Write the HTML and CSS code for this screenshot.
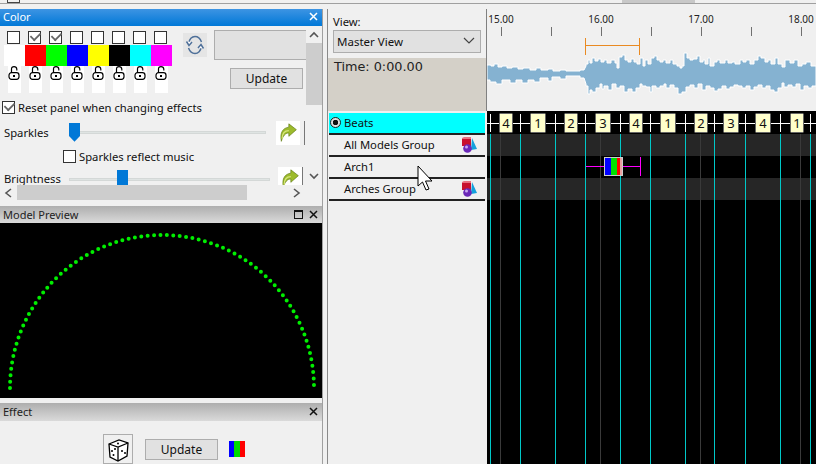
FILE: index.html
```html
<!DOCTYPE html>
<html lang="en">
<head>
  <meta charset="UTF-8">
  <title>Sequencer</title>
  <link rel="stylesheet" href="styles.css">
</head>
<body>

  <svg class="defs" width="0" height="0">
    <symbol id="lock" viewBox="0 0 13 14">
      <path d="M3.500 7V3Q3.500 .7 6 .7T8.800 3V4.500" fill="none" stroke="#000" stroke-width="1.200"/>
      <rect x="1" y="6.700" width="10" height="6.600" rx="2.500" fill="#fff" stroke="#000" stroke-width="1.200"/>
      <rect x="5" y="9" width="2" height="2" fill="#000"/>
    </symbol>
    <symbol id="redo" viewBox="0 0 24 24">
      <path d="M22 8 13 1V5C6 6 2 11 4 22 6 15 9 12 13 12V16Z" fill="#9dbb2c" stroke="#5f7a12" stroke-width=".8"/>
      <path d="M5 19C5 12 8 9 13 9" fill="none" stroke="#d6e67a" stroke-width="1.500"/>
    </symbol>
    <symbol id="group" viewBox="0 0 16 16">
      <path d="M11 1 16 12 10 13Z" fill="#14a0dc"/>
      <rect x="1" y="1" width="9" height="8" fill="#c8102e"/>
      <path d="M1 1 3 0H10V2H1Z" fill="#e87080"/>
      <circle cx="6.500" cy="11.500" r="4.300" fill="#6a28b8"/>
      <circle cx="5.500" cy="10" r="1.500" fill="#c8a8f0"/>
    </symbol>
    <symbol id="close" viewBox="0 0 9 9">
      <path d="M1 1 8 8M8 1 1 8" fill="none" stroke="currentColor" stroke-width="1.500"/>
    </symbol>
  </svg>

  <div class="top-strip">
    <span class="top-box"></span>
    <span class="top-thumb"></span>
  </div>

  <div class="main">
    <!-- left dock -->
    <div class="left-dock">
      <div class="panel-title active">
        <span>Color</span>
        <span class="title-btn"><svg class="close"><use href="#close"/></svg></span>
      </div>
      <div class="color-panel">
        <div class="color-body">
          <div class="color-content">
            <div class="palette-row">
              <div class="palette">
                <div class="swatch-col"><span class="check"></span><span class="swatch c-white"></span><span class="lock-strip"><svg class="lock"><use href="#lock"/></svg></span></div>
                <div class="swatch-col"><span class="check on"></span><span class="swatch c-red"></span><span class="lock-strip"><svg class="lock"><use href="#lock"/></svg></span></div>
                <div class="swatch-col"><span class="check on"></span><span class="swatch c-green"></span><span class="lock-strip"><svg class="lock"><use href="#lock"/></svg></span></div>
                <div class="swatch-col"><span class="check"></span><span class="swatch c-blue"></span><span class="lock-strip"><svg class="lock"><use href="#lock"/></svg></span></div>
                <div class="swatch-col"><span class="check"></span><span class="swatch c-yellow"></span><span class="lock-strip"><svg class="lock"><use href="#lock"/></svg></span></div>
                <div class="swatch-col"><span class="check"></span><span class="swatch c-black"></span><span class="lock-strip"><svg class="lock"><use href="#lock"/></svg></span></div>
                <div class="swatch-col"><span class="check"></span><span class="swatch c-cyan"></span><span class="lock-strip"><svg class="lock"><use href="#lock"/></svg></span></div>
                <div class="swatch-col"><span class="check"></span><span class="swatch c-magenta"></span><span class="lock-strip"><svg class="lock"><use href="#lock"/></svg></span></div>
              </div>
              <span class="refresh">
                <svg width="24" height="24" viewBox="0 0 24 24" fill="none" stroke="#4f7099" stroke-width="1.500">
                  <path d="M6 10C6 6 9 3.500 12 3.500S17 5 18.500 9"/>
                  <path d="M3.500 8.500 6 12.500 9 9" fill="#fff"/>
                  <path d="M18 14C18 18 15 20.500 12 20.500S7 19 5.500 15"/>
                  <path d="M15 15 18 11.500 20.500 15.500" fill="#fff"/>
                </svg>
              </span>
              <div class="preview-col">
                <div class="preview-box"></div>
                <button class="btn update-small">Update</button>
              </div>
            </div>
            <label class="check-row reset-row"><span class="check on"></span>Reset panel when changing effects</label>
            <div class="slider-row sparkles-row">
              <span class="slider-label">Sparkles</span>
              <div class="track sparkles-track"><span class="thumb point"></span></div>
              <svg class="redo"><use href="#redo"/></svg>
              <span class="bar"></span>
            </div>
            <label class="check-row music-row"><span class="check"></span>Sparkles reflect music</label>
            <div class="slider-row brightness-row">
              <span class="slider-label">Brightness</span>
              <div class="track brightness-track"><span class="thumb"></span></div>
              <svg class="redo"><use href="#redo"/></svg>
              <span class="bar"></span>
            </div>
          </div>
          <div class="vscroll">
            <svg class="arrow" width="16" height="17" viewBox="0 0 16 17" fill="none" stroke="#555" stroke-width="1.600"><path d="M4 11 8 7 12 11"/></svg>
            <span class="vthumb"></span>
            <svg class="arrow" width="16" height="17" viewBox="0 0 16 17" fill="none" stroke="#555" stroke-width="1.600"><path d="M4 6 8 10 12 6"/></svg>
          </div>
        </div>
        <div class="hscroll">
          <svg width="17" height="16" viewBox="0 0 17 16" fill="none" stroke="#555" stroke-width="1.600"><path d="M11 4 6 8 11 12"/></svg>
          <span class="hthumb"></span>
          <svg width="17" height="16" viewBox="0 0 17 16" fill="none" stroke="#555" stroke-width="1.600"><path d="M6 4 11 8 6 12"/></svg>
        </div>
      </div>

      <div class="panel-title preview-title">
        <span>Model Preview</span>
        <span class="title-btn"><i class="restore"></i><svg class="close"><use href="#close"/></svg></span>
      </div>
      <div class="model-preview">
        <svg width="322" height="175" viewBox="0 224 322 175">
          <path class="arch" d="M10 389A152 153 0 0 1 314 389"/>
        </svg>
      </div>

      <div class="panel-title effect-title">
        <span>Effect</span>
        <span class="title-btn"><svg class="close"><use href="#close"/></svg></span>
      </div>
      <div class="effect-panel">
        <span class="dice">
          <svg width="24" height="24" viewBox="0 0 24 24" fill="#fff" stroke="#000" stroke-width="1.300">
            <path d="M3 6 13 2 22 5 21 18 12 23 4 19Z"/>
            <path d="M3 6 12 9 22 5M12 9V23" fill="none"/>
            <g fill="#000" stroke="none">
              <circle cx="12" cy="5.500" r="1"/>
              <circle cx="6" cy="13" r="1"/>
              <circle cx="9" cy="11" r="1"/>
              <circle cx="7.500" cy="17" r="1"/>
              <circle cx="16" cy="13" r="1"/>
              <circle cx="19" cy="15" r="1"/>
            </g>
          </svg>
        </span>
        <button class="btn update-effect">Update</button>
        <span class="rgb-icon"></span>
      </div>
    </div>

    <!-- sequencer side -->
    <div class="sequencer">
      <div class="seq-header">
        <div class="view-panel">
          <div class="view-select">
            <div class="view-label">View:</div>
            <div class="select">
              <span>Master View</span>
              <svg width="12" height="8" viewBox="0 0 12 8" fill="none" stroke="#444" stroke-width="1.200"><path d="M1 1 6 6 11 1"/></svg>
            </div>
          </div>
          <div class="time-box">Time: 0:00.00</div>
        </div>
        <div class="wave-panel">
          <svg width="329" height="102" viewBox="487 9 329 102">
            <g class="ruler-text">
              <text x="501" y="23">15.00</text>
              <text x="601" y="23">16.00</text>
              <text x="701" y="23">17.00</text>
              <text x="801" y="23">18.00</text>
            </g>
            <path class="ticks" d="M501.500 27V36M551.500 27V36M601.500 27V36M651.500 27V36M701.500 27V36M751.500 27V36M801.500 27V36"/>
            <path class="range" d="M585.500 38V55M639.500 38V55M585.500 45.500H639.500"/>
            <path class="wave" d="M487 65H491V66H494V64H498V67H502V66H507V68H512V67H518V69H523V68H530V70H536V68H541V70H548V69H553V71H560V70H566V71H572V71H580V70H584L586 66V64H588V60H590V63H592V58H595V61H598V59H601V62H604V60H607V63H611V60H615V63H617V68H619V57H622V55H625V60H628V62H631V59H634V62H637V64H640V58H643V66H645V60H648V64H651V58H654V56H657V60H660V62H663V60H666V63H670V60H673V64H677V66H680V68H682V66H684V53H687V58H690V60H693V59H697V56H700V62H703V60H705V64H708V58H710V66H714V62H717V60H720V63H725V60H728V63H732V62H735V64H740V60H743V62H746V60H750V64H754V60H758V56H761V58H765V62H768V60H771V64H775V58H778V64H782V67H785V60H790V63H794V60H798V66H802V64H806V62H811V66H816V86H812V88H808V86H804V90H800V84H796V87H792V85H788V87H784V83H782V88H778V92H774V90H770V86H766V88H762V85H758V87H754V90H750V86H746V88H742V86H738V85H734V87H730V89H726V86H722V89H718V91H714V88H710V86H706V90H702V84H698V88H694V85H690V87H686V92H682V94H678V88H674V85H670V88H666V84H664V86H660V88H656V86H652V92H650V87H646V86H642V84H640V88H636V92H632V89H628V92H624V86H620V88H616V84H612V90H608V86H604V89H602V84H600V88H596V92H592V90H590V94H588V86H586V84L584 78H580V76H566V79H560V77H552V81H548V78H540V82H534V80H528V83H522V80H516V83H510V80H502V84H496V82H490V80H487Z"/>
          </svg>
        </div>
      </div>

      <div class="seq-body">
        <div class="track-list">
          <div class="row beats-row"><span class="radio"></span>Beats</div>
          <div class="row">All Models Group<svg class="group-icon"><use href="#group"/></svg></div>
          <div class="row">Arch1</div>
          <div class="row">Arches Group<svg class="group-icon"><use href="#group"/></svg></div>
        </div>
        <div class="grid-panel">
          <svg width="329" height="353" viewBox="487 111 329 353">
            <rect class="band" x="487" y="134" width="329" height="22"/>
            <rect class="band" x="487" y="178" width="329" height="22"/>
            <path class="grid-line" d="M500.500 134V464M600.500 134V464M700.500 134V464M800.500 134V464"/>
            <path class="beat-line" d="M490.500 134V464M520.500 134V464M555.500 134V464M585.500 134V464M620.500 134V464M650.500 134V464M685.500 134V464M714.500 134V464M745.500 134V464M780.500 134V464M810.500 134V464"/>
            <path class="cross" d="M487 123.500H816M490.500 114V132M520.500 114V132M555.500 114V132M585.500 114V132M620.500 114V132M650.500 114V132M685.500 114V132M714.500 114V132M745.500 114V132M780.500 114V132M810.500 114V132"/>
            <g class="beat-box">
              <rect x="499.500" y="113.500" width="13" height="19" rx="1"/>
              <rect x="530.500" y="113.500" width="15" height="19" rx="1"/>
              <rect x="564.500" y="113.500" width="13" height="19" rx="1"/>
              <rect x="595.500" y="113.500" width="15" height="19" rx="1"/>
              <rect x="629.500" y="113.500" width="13" height="19" rx="1"/>
              <rect x="660.500" y="113.500" width="15" height="19" rx="1"/>
              <rect x="694.500" y="113.500" width="13" height="19" rx="1"/>
              <rect x="723.500" y="113.500" width="15" height="19" rx="1"/>
              <rect x="755.500" y="113.500" width="15" height="19" rx="1"/>
              <rect x="790.500" y="113.500" width="13" height="19" rx="1"/>
            </g>
            <g class="beat-text">
              <text x="506" y="128">4</text>
              <text x="538" y="128">1</text>
              <text x="571" y="128">2</text>
              <text x="603" y="128">3</text>
              <text x="636" y="128">4</text>
              <text x="668" y="128">1</text>
              <text x="701" y="128">2</text>
              <text x="731" y="128">3</text>
              <text x="763" y="128">4</text>
              <text x="797" y="128">1</text>
            </g>
            <path class="effect-span" d="M586 166.500H604M623 166.500H640M640.500 157V176"/>
            <rect x="604" y="157" width="19" height="19" fill="#ccc"/>
            <rect x="605" y="158" width="6" height="17" fill="#0000ff"/>
            <rect x="611" y="158" width="6" height="17" fill="#00e000"/>
            <rect x="617" y="158" width="3" height="17" fill="#ff0000"/>
            <rect x="620" y="158" width="2" height="17" fill="#e8a0a0"/>
          </svg>
        </div>
      </div>
    </div>
  </div>

  <svg class="cursor" width="16" height="26" viewBox="0 0 16 26">
    <path d="M1 1V21L5.500 17 9 25 12 24 8.500 16H15Z" fill="#fff" stroke="#000"/>
  </svg>

</body>
</html>
```

FILE: styles.css
```css
* {
  box-sizing: border-box;
}

html, body {
  margin: 0;
  height: 464px;
  overflow: hidden;
}

body {
  position: relative;
  background-color: #f0f0f0;
  font-family: "Noto Sans", "Open Sans", sans-serif;
  font-size: 11.25px;
  color: #111;
}

.defs {
  position: absolute;
}

.top-strip {
  position: relative;
  height: 9px;
  background: linear-gradient(#f0f0f0 3px, #a0a0a0 3px, #a0a0a0 4px, #f0f0f0 4px);
}

.top-box {
  position: absolute;
  left: 7px;
  top: -1px;
  width: 13px;
  height: 4px;
  border: 1px solid #444;
}

.top-thumb {
  position: absolute;
  left: 622px;
  top: 0;
  width: 73px;
  height: 3px;
  background-color: #c8c8c8;
}

.main {
  display: flex;
  height: 455px;
}

/* left dock */
.left-dock {
  width: 323px;
  border-right: 1px solid #a0a0a0;
  margin-right: 4px;
  display: flex;
  flex-direction: column;
}

.panel-title {
  height: 18px;
  padding: 0 3px 1px;
  display: flex;
  justify-content: space-between;
  align-items: center;
  font-size: 11px;
  background: linear-gradient(#aeaeae, #dadada);
  color: #222;
}

.panel-title.active {
  height: 17px;
  background: linear-gradient(#3d94e3, #0078d7);
  color: #fff;
}

.title-btn {
  display: flex;
  align-items: center;
  gap: 6px;
  color: #111;
  margin-right: 1px;
}

.active .title-btn {
  color: #fff;
}

.close {
  display: block;
  width: 9px;
  height: 9px;
}

.restore {
  display: block;
  width: 9px;
  height: 9px;
  border: 1px solid #111;
  border-top-width: 2px;
}

.color-panel {
  height: 175px;
}

.color-body {
  height: 159px;
  display: flex;
}

.color-content {
  width: 306px;
  overflow: hidden;
}

.palette-row {
  display: flex;
  align-items: flex-start;
  padding: 5px 0 0 4px;
  height: 67px;
}

.palette {
  display: flex;
  width: 168px;
}

.swatch-col {
  width: 21px;
  display: flex;
  flex-direction: column;
}

.check {
  position: relative;
  width: 13px;
  height: 13px;
  flex: none;
  border: 1px solid #333;
  background-color: #fff;
}

.check.on::after {
  content: "";
  position: absolute;
  left: 1px;
  top: 0;
  width: 9px;
  height: 5px;
  border-left: 2px solid #666;
  border-bottom: 2px solid #666;
  transform: rotate(-45deg) scale(.9, .9);
}

.swatch-col .check {
  margin: 0 0 1px 3px;
}

.swatch {
  height: 21px;
}

.c-white { background-color: #fff; }
.c-red { background-color: #f00; }
.c-green { background-color: #0f0; }
.c-blue { background-color: #00f; }
.c-yellow { background-color: #ff0; }
.c-black { background-color: #000; }
.c-cyan { background-color: #0ff; }
.c-magenta { background-color: #f0f; }

.lock-strip {
  width: 13px;
  height: 27px;
  margin-left: 4px;
  background-color: #fff;
}

.lock {
  display: block;
  width: 13px;
  height: 14px;
}

.refresh {
  width: 24px;
  height: 24px;
  margin: 2px 0 0 11px;
  background-color: #e5e5e5;
}

.preview-col {
  margin: -1px 0 0 7px;
  width: 92px;
  flex: none;
}

.preview-box {
  height: 30px;
  background-color: #e1e1e1;
  border: 1px solid #adadad;
  border-right: none;
}

.btn {
  display: block;
  height: 21px;
  padding: 0;
  background-color: #e1e1e1;
  border: 1px solid #adadad;
  font: inherit;
  font-size: 12px;
  color: #111;
}

.update-small {
  width: 73px;
  margin: 8px 0 0 16px;
}

.check-row {
  display: flex;
  align-items: flex-start;
  gap: 3px;
  height: 13px;
  line-height: 13px;
}

.reset-row {
  margin: 8px 0 0 2px;
}

.slider-row {
  display: flex;
  align-items: center;
  height: 24px;
  position: relative;
}

.sparkles-row {
  margin-top: 7px;
}

.slider-label {
  position: absolute;
  left: 4px;
  top: 4px;
  line-height: 16px;
}

.track {
  position: relative;
  height: 3px;
  background-color: #dfe4e3;
  border: 1px solid #d4d8d7;
}

.sparkles-track {
  width: 192px;
  margin: -1px 0 0 74px;
}

.thumb {
  position: absolute;
  left: 47px;
  top: -9px;
  width: 11px;
  height: 16px;
  background-color: #0078d7;
}

.thumb.point {
  left: -6px;
  top: -9px;
  height: 19px;
  clip-path: polygon(0 0, 100% 0, 100% 70%, 50% 100%, 0 70%);
}

.redo {
  width: 24px;
  height: 24px;
  padding: 2px;
  background-color: #fff;
}

.sparkles-row .redo {
  margin-left: 10px;
}

.bar {
  width: 1px;
  height: 24px;
  margin-left: 4px;
  background-color: #777;
}

.music-row {
  margin: 5px 0 0 63px;
}

.brightness-row {
  margin-top: 4px;
}

.brightness-track {
  width: 201px;
  margin: 2px 0 0 69px;
}

.brightness-row .redo {
  margin-left: 8px;
}

.brightness-row .bar {
  margin-left: 0;
}

.vscroll {
  width: 16px;
  display: flex;
  flex-direction: column;
}

.vscroll .arrow {
  display: block;
  flex: none;
}

.vthumb {
  height: 62px;
  margin-bottom: 63px;
  background-color: #cdcdcd;
}

.hscroll {
  height: 16px;
  display: flex;
  align-items: center;
}

.hthumb {
  width: 230px;
  height: 15px;
  background-color: #cdcdcd;
  margin-right: 41px;
}

.preview-title {
  margin-top: 5px;
}

.model-preview {
  height: 175px;
  background-color: #000;
}

.model-preview svg {
  display: block;
}

.arch {
  fill: none;
  stroke: #00ee00;
  stroke-width: 4;
  stroke-linecap: round;
  stroke-dasharray: 0 6.43;
}

.effect-title {
  margin-top: 5px;
}

.effect-panel {
  flex: 1;
  display: flex;
  align-items: flex-start;
  padding: 13px 0 0 103px;
}

.dice {
  width: 30px;
  height: 30px;
  border: 1px solid #adadad;
  background-color: #f0f0f0;
  padding: 3px 2px;
}

.update-effect {
  width: 73px;
  height: 21px;
  margin: 5px 0 0 12px;
}

.rgb-icon {
  width: 16px;
  height: 16px;
  margin: 7px 0 0 11px;
  background: linear-gradient(90deg, #00f 33%, #0d0 33%, #0d0 66%, #f00 66%);
}

/* sequencer */
.sequencer {
  flex: 1;
  border-left: 1px solid #8a8a8a;
  display: flex;
  flex-direction: column;
}

.seq-header {
  height: 102px;
  display: flex;
}

.view-panel {
  width: 158px;
  display: flex;
  flex-direction: column;
}

.view-select {
  height: 49px;
  padding: 5px 5px 0;
}

.view-label {
  line-height: 16px;
}

.select {
  height: 23px;
  padding: 0 3px 1px 3px;
  display: flex;
  justify-content: space-between;
  align-items: center;
  background-color: #e1e1e1;
  border: 1px solid #adadad;
  font-size: 11.5px;
}

.select svg {
  margin-right: 2px;
}

.time-box {
  flex: 1;
  padding: 0 6px;
  background-color: #d4d0c8;
  font-family: "DejaVu Sans", sans-serif;
  font-size: 12.8px;
  line-height: 18px;
  color: #222;
}

.wave-panel {
  flex: 1;
  border-left: 1px solid #808080;
  border-top: 1px solid #555;
  margin-top: -1px;
  height: 103px;
  overflow: hidden;
}

.wave-panel svg, .grid-panel svg {
  display: block;
}

.ruler-text text {
  font-size: 10px;
  text-anchor: middle;
  fill: #222;
}

.ticks {
  stroke: #707070;
  fill: none;
}

.range {
  stroke: #e98a22;
  fill: none;
}

.wave {
  fill: #85b2d1;
  stroke: #fff;
}

.seq-body {
  flex: 1;
  display: flex;
}

.track-list {
  width: 158px;
  padding: 2px 1px 0;
}

.row {
  height: 22px;
  padding: 0 8px 1px 15px;
  display: flex;
  justify-content: space-between;
  align-items: center;
  border-bottom: 2px solid #222;
}

.beats-row {
  justify-content: flex-start;
  gap: 3px;
  padding-left: 1px;
  background-color: #0ff;
}

.radio {
  width: 11px;
  height: 11px;
  border: 1px solid #222;
  border-radius: 50%;
  background: radial-gradient(#111 2.500px, #ddd 3px);
}

.group-icon {
  width: 16px;
  height: 16px;
}

.grid-panel {
  flex: 1;
  margin-left: 1px;
  background-color: #000;
  overflow: hidden;
}

.band {
  fill: #262626;
}

.grid-line {
  stroke: #3a3a3a;
  fill: none;
}

.beat-line {
  stroke: #00c8c8;
  fill: none;
}

.cross {
  stroke: #fff;
  fill: none;
}

.beat-box rect {
  fill: #ffffcc;
  stroke: #666;
}

.beat-text text {
  font-size: 13px;
  text-anchor: middle;
  fill: #111;
}

.effect-span {
  stroke: #f0f;
  fill: none;
}

.cursor {
  position: absolute;
  left: 417px;
  top: 165px;
}
```
